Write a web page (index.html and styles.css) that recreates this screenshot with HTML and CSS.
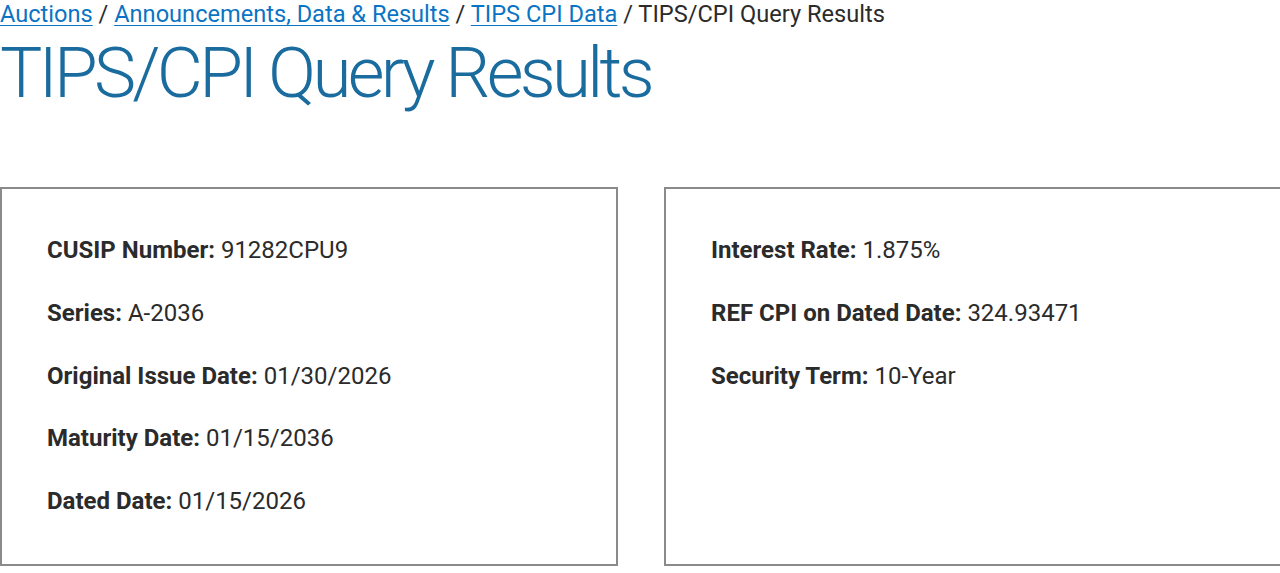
FILE: index.html
```html
<!DOCTYPE html>
<html lang="en">
<head>
<meta charset="utf-8">
<title>TIPS/CPI Query Results</title>
<link rel="stylesheet" href="styles.css">
</head>
<body>
<nav class="breadcrumb">
  <a href="#">Auctions</a> / <a href="#">Announcements, Data &amp; Results</a> / <a href="#">TIPS CPI Data</a> / TIPS/CPI Query Results
</nav>
<h1 class="title">TIPS/CPI Query Results</h1>
<div class="cards">
  <div class="card">
    <p class="row"><strong>CUSIP Number:</strong> 91282CPU9</p>
    <p class="row"><strong>Series:</strong> A-2036</p>
    <p class="row"><strong>Original Issue Date:</strong> 01/30/2026</p>
    <p class="row"><strong>Maturity Date:</strong> 01/15/2036</p>
    <p class="row"><strong>Dated Date:</strong> 01/15/2026</p>
  </div>
  <div class="card">
    <p class="row"><strong>Interest Rate:</strong> 1.875%</p>
    <p class="row"><strong>REF CPI on Dated Date:</strong> 324.93471</p>
    <p class="row"><strong>Security Term:</strong> 10-Year</p>
  </div>
</div>
</body>
</html>
```
FILE: styles.css
```css
html, body {
  margin: 0;
  padding: 0;
  background: #ffffff;
  overflow: hidden;
}
body {
  font-family: Roboto, "Liberation Sans", sans-serif;
  color: #2b2b2b;
}
.breadcrumb {
  font-size: 23.6px;
  line-height: 28px;
  color: #2b2b2b;
}
.breadcrumb a {
  color: #0a74c4;
  text-decoration: underline;
  text-underline-offset: 3px;
  text-decoration-thickness: 1px;
}
.title {
  margin: 0;
  padding-top: 2px;
  font-size: 71px;
  font-weight: 300;
  line-height: 86px;
  color: #1a6b9e;
  letter-spacing: -3.7px;
}
.cards {
  display: flex;
  gap: 46px;
  margin-top: 71px;
  width: 1300px;
}
.card {
  flex: 0 0 618px;
  box-sizing: border-box;
  height: 379px;
  border: 2px solid #8a8a8a;
  padding: 30px 45px;
}
.row {
  margin: 0;
  font-size: 24px;
  line-height: 62.75px;
}
.row strong {
  font-weight: 700;
}
```
